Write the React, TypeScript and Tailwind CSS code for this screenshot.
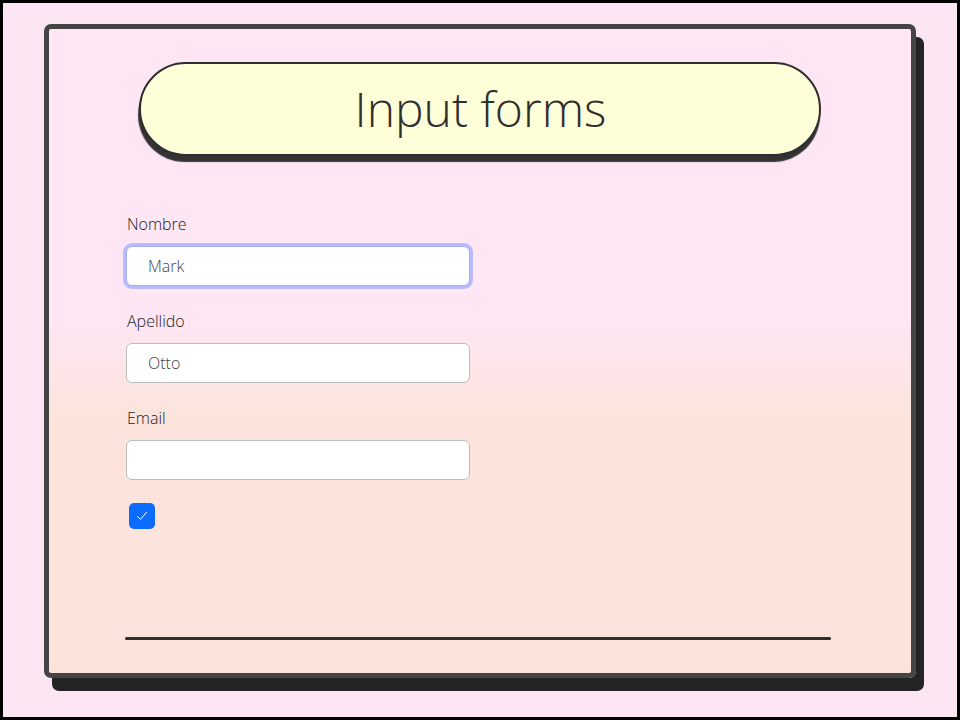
import React from "react";

const fields = [
  { label: "Nombre", value: "Mark", focused: true },
  { label: "Apellido", value: "Otto", focused: false },
  { label: "Email", value: "", focused: false },
];

const Field = ({ label, value, focused }: { label: string; value: string; focused: boolean }) => (
  <div className="flex flex-col">
    <label className="text-[16px] leading-[20px] font-light text-[#222222] pl-[1px]">{label}</label>
    <div
      className={
        focused
          ? "mt-[12px] w-[344px] h-[40px] rounded-[6px] bg-white border border-[#a7acf7] shadow-[0_0_0_3px_#b8bcfc] flex items-center pl-[21px]"
          : "mt-[12px] w-[344px] h-[40px] rounded-[6px] bg-white border border-[#bdbdbd] flex items-center pl-[21px]"
      }
    >
      <span className="text-[16px] font-light text-[#444444]">{value}</span>
    </div>
  </div>
);

export default function App() {
  return (
    <div
      className="w-[960px] h-[720px] border-[3px] border-black bg-[#fde6f4] pl-[41px] pt-[21px]"
      style={{ fontFamily: '"Open Sans", "Noto Sans", sans-serif' }}
    >
      <div className="w-[872px] h-[654px] rounded-[7px] border-[5px] border-[#444444] shadow-[8px_13px_0_0_#242424] bg-linear-to-b from-[#fee6f4] from-45% to-[#fce4dd] to-60% flex flex-col">
        <div className="flex justify-center pt-[33px]">
          <div className="w-[682px] h-[94px] rounded-full bg-[#fefed9] border-2 border-[#2e2e2e] shadow-[-1px_6px_1px_0_#333333] flex items-center justify-center">
            <h1 className="text-[48px] font-light text-[#2f2f2f] leading-none pb-[1px] pl-[1px]">Input forms</h1>
          </div>
        </div>

        <div className="pl-[77px] pt-[58px] flex flex-col gap-[25px]">
          {fields.map((f) => (
            <Field key={f.label} {...f} />
          ))}
        </div>

        <div className="pl-[80px] pt-[23px]">
          <div className="w-[26px] h-[26px] rounded-[5px] bg-[#0b6cff] flex items-center justify-center">
            <svg width="12" height="10" viewBox="0 0 12 10" fill="none">
              <path d="M1.5 5.4 L4.5 8.4 L10.5 1.2" stroke="white" strokeWidth="1" strokeLinecap="round" strokeLinejoin="round" />
            </svg>
          </div>
        </div>

        <div className="flex-1" />
        <div className="pl-[76px] pr-[80px] pb-[33px]">
          <div className="h-[3px] rounded-full bg-[#2e2e2e]" />
        </div>
      </div>
    </div>
  );
}
